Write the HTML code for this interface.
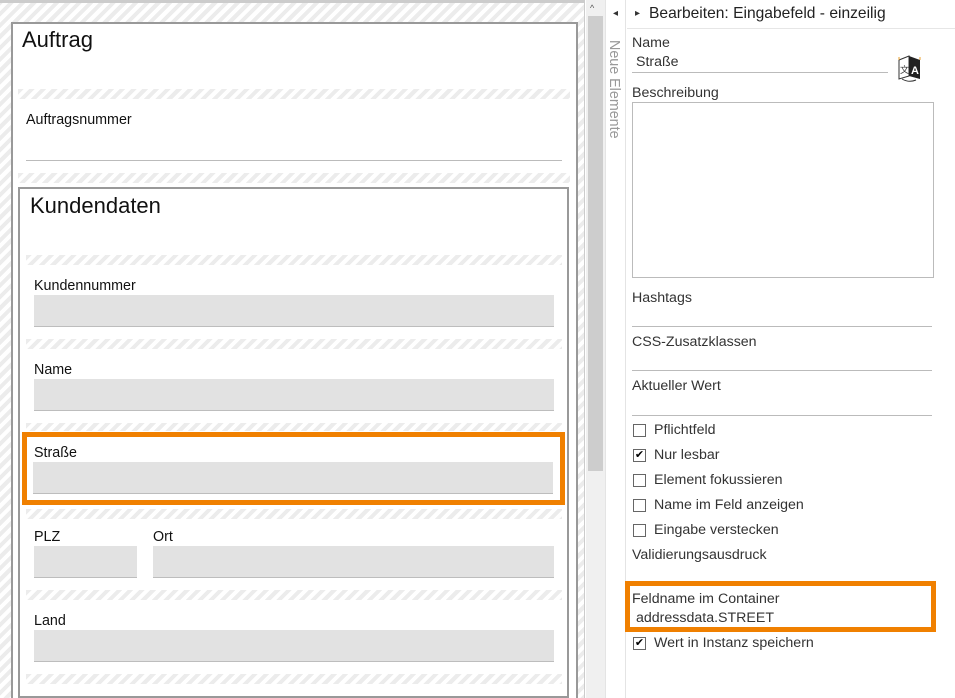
<!DOCTYPE html>
<html style="overflow:hidden"><head><meta charset="utf-8"><style>
*{margin:0;padding:0;box-sizing:border-box}
html,body{width:955px;height:698px;overflow:hidden}
body{background:#fff;font-family:"Liberation Sans",sans-serif;color:#222;position:relative}
.a{position:absolute}
.h{position:absolute;background:repeating-linear-gradient(135deg,#ececec 0 4px,#fff 4px 8px)}
.lbl{position:absolute;font-size:14.3px;color:#111;line-height:15px}
.inp{position:absolute;background:#e2e2e2;border-bottom:1px solid #bdbdbd}
.t{position:absolute;font-size:14.2px;color:#333;line-height:15px;white-space:nowrap}
.ln{position:absolute;height:1px;background:#bbb}
.cb{position:absolute;width:13px;height:13px;border:1px solid #666;background:#fff;font-size:11px;line-height:11px;text-align:center;color:#000}
</style></head><body>
<div class="a" style="left:0;top:0;width:955px;height:698px;overflow:hidden">
<div class="a" style="left:0;top:0;width:585px;height:698px;background:repeating-linear-gradient(135deg,#ececec 0 4px,#fff 4px 8px)"></div>
<div class="a" style="left:0;top:0;width:585px;height:3px;background:#ccc"></div>
<div class="a" style="left:584px;top:0;width:1px;height:698px;background:#ccc"></div>
<div class="a" style="left:11px;top:22px;width:567px;height:690px;border:2px solid #999;background:#fff"></div>
<div class="a" style="left:22px;top:27px;font-size:22px;color:#111">Auftrag</div>
<div class="h" style="left:18px;top:89px;width:552px;height:10px"></div>
<div class="lbl" style="left:26px;top:113px">Auftragsnummer</div>
<div class="ln" style="left:26px;top:160px;width:536px"></div>
<div class="h" style="left:18px;top:173px;width:552px;height:10px"></div>
<div class="a" style="left:18px;top:187px;width:551px;height:511px;border:2px solid #999;background:#fff"></div>
<div class="a" style="left:30px;top:193px;font-size:22px;color:#111">Kundendaten</div>
<div class="h" style="left:26px;top:255px;width:536px;height:10px"></div>
<div class="lbl" style="left:34px;top:279px">Kundennummer</div>
<div class="inp" style="left:34px;top:295px;width:520px;height:32px"></div>
<div class="h" style="left:26px;top:339px;width:536px;height:10px"></div>
<div class="lbl" style="left:34px;top:363px">Name</div>
<div class="inp" style="left:34px;top:379px;width:520px;height:32px"></div>
<div class="h" style="left:26px;top:423px;width:536px;height:8px"></div>
<div class="a" style="left:22px;top:432px;width:543px;height:73px;border:5px solid #f08000;background:#fff"></div>
<div class="lbl" style="left:34px;top:446px">Straße</div>
<div class="inp" style="left:33px;top:462px;width:520px;height:32px"></div>
<div class="h" style="left:26px;top:509px;width:536px;height:10px"></div>
<div class="lbl" style="left:34px;top:530px">PLZ</div>
<div class="lbl" style="left:153px;top:530px">Ort</div>
<div class="inp" style="left:34px;top:546px;width:103px;height:32px"></div>
<div class="inp" style="left:153px;top:546px;width:401px;height:32px"></div>
<div class="h" style="left:26px;top:590px;width:536px;height:10px"></div>
<div class="lbl" style="left:34px;top:614px">Land</div>
<div class="inp" style="left:34px;top:630px;width:520px;height:32px"></div>
<div class="h" style="left:26px;top:674px;width:536px;height:10px"></div>
<!-- scrollbar -->
<div class="a" style="left:586px;top:0;width:19px;height:698px;background:#f0f0f0"></div>
<div class="a" style="left:588px;top:16px;width:15px;height:455px;background:#cdcdcd"></div>
<div class="a" style="left:590px;top:3px;font-size:9px;color:#555">^</div>
<!-- neue elemente -->
<div class="a" style="left:605px;top:0;width:21px;height:698px;background:#fff;border-left:1px solid #e4e4e4;border-right:1px solid #e4e4e4"></div>
<div class="a" style="left:622px;top:40px;transform-origin:0 0;transform:rotate(90deg);font-size:14.3px;color:#999;white-space:nowrap">Neue Elemente</div>
<div class="a" style="left:613px;top:8px;font-size:10px;color:#333">◂</div>
<!-- right panel -->
<div class="a" style="left:635px;top:8px;font-size:10px;color:#333">▸</div>
<div class="a" style="left:649px;top:5px;font-size:15.6px;color:#222;white-space:nowrap">Bearbeiten: Eingabefeld - einzeilig</div>
<div class="a" style="left:627px;top:28px;width:328px;height:1px;background:#e6e6e6"></div>
<div class="t" style="left:632px;top:36px">Name</div>
<div class="t" style="left:636px;top:55px">Straße</div>
<div class="ln" style="left:632px;top:72px;width:256px"></div>
<svg class="a" style="left:896px;top:52px" width="26" height="31" viewBox="0 0 26 31"><path d="M3 8 L13 4 L13 24 L3 27Z" fill="#fff" stroke="#333" stroke-width="1"/><path d="M13 4 L24 8 L24 27 L13 24Z" fill="#222"/><text x="15" y="22" font-size="11" font-weight="bold" fill="#fff" font-family="Liberation Sans">A</text><text x="4" y="21" font-size="9" fill="#333" font-family="Liberation Sans">文</text><path d="M6 27 Q13 31 20 28" stroke="#333" fill="none"/><path d="M3 5 L3 8 M24 5 L24 8" stroke="#e8a030"/></svg>
<div class="t" style="left:632px;top:86px">Beschreibung</div>
<div class="a" style="left:632px;top:102px;width:302px;height:176px;border:1px solid #bbb"></div>
<div class="t" style="left:632px;top:291px">Hashtags</div>
<div class="ln" style="left:632px;top:326px;width:300px"></div>
<div class="t" style="left:632px;top:335px">CSS-Zusatzklassen</div>
<div class="ln" style="left:632px;top:370px;width:300px"></div>
<div class="t" style="left:632px;top:379px">Aktueller Wert</div>
<div class="ln" style="left:632px;top:415px;width:300px"></div>
<div class="cb" style="left:633px;top:424px"></div><div class="t" style="left:654px;top:423px">Pflichtfeld</div>
<div class="cb" style="left:633px;top:449px">✔</div><div class="t" style="left:654px;top:448px">Nur lesbar</div>
<div class="cb" style="left:633px;top:474px"></div><div class="t" style="left:654px;top:473px">Element fokussieren</div>
<div class="cb" style="left:633px;top:499px"></div><div class="t" style="left:654px;top:498px">Name im Feld anzeigen</div>
<div class="cb" style="left:633px;top:524px"></div><div class="t" style="left:654px;top:523px">Eingabe verstecken</div>
<div class="t" style="left:632px;top:548px">Validierungsausdruck</div>
<div class="a" style="left:625px;top:581px;width:311px;height:51px;border:5px solid #f08000"></div>
<div class="t" style="left:632px;top:592px">Feldname im Container</div>
<div class="t" style="left:636px;top:611px">addressdata.STREET</div>
<div class="cb" style="left:633px;top:637px">✔</div><div class="t" style="left:654px;top:636px">Wert in Instanz speichern</div>
</div>
</body></html>
